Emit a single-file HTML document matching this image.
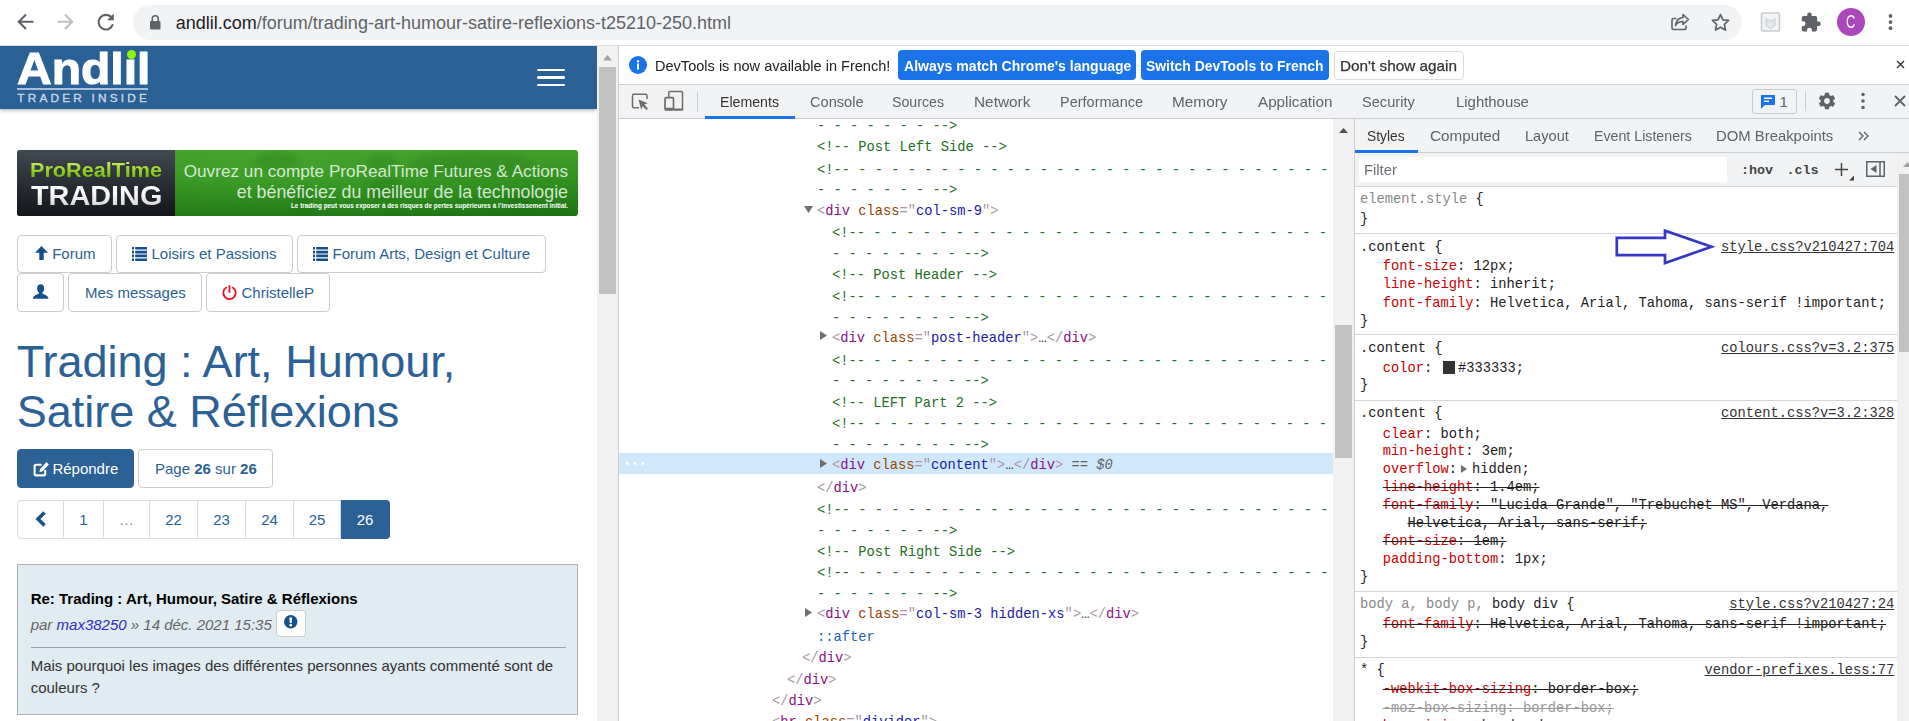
<!DOCTYPE html>
<html lang="fr"><head><meta charset="utf-8"><title>Trading : Art, Humour, Satire &amp; Réflexions</title>
<style>
*{box-sizing:border-box;margin:0;padding:0}
html,body{width:1909px;height:721px;overflow:hidden;background:#fff}
body{font-family:"Liberation Sans",Arial,sans-serif;position:relative;color:#333}
.abs,.abs>*{position:absolute}
.t{white-space:pre}
svg{display:block;overflow:visible}
/* chrome toolbar */
#tb{left:0;top:0;width:1909px;height:45px;background:#fff}
#tbline{left:0;top:45px;width:1909px;height:1px;background:#dcdde0}
#pill{left:133px;top:5px;width:1609px;height:35px;border-radius:18px;background:#f1f3f4}
#url{left:175.8px;top:11.7px;font-size:18px;line-height:22px;color:#5f6368;white-space:nowrap}
#url b{position:static;font-weight:normal;color:#202124}
/* page */
#page{left:0;top:46px;width:597px;height:675px;overflow:hidden;background:#fff}
#hdr{left:0;top:0;width:597px;height:62.5px;background:#2b6094;box-shadow:0 1px 4px rgba(0,0,0,.35)}
.bar{left:537px;width:28px;height:2.6px;border-radius:1.3px;background:#fff}
#logo{left:16.6px;top:.3px;font-size:44.6px;line-height:46px;font-weight:bold;color:#fff;letter-spacing:0;white-space:nowrap;transform:scaleX(1.077);transform-origin:0 0;-webkit-text-stroke:1.1px #fff}
#logoline{left:17px;top:42px;width:131px;height:2px;background:#a9bfd6}
#logosub{left:17.3px;top:45.3px;font-size:11.8px;line-height:14px;font-weight:normal;color:#ccd8e5;letter-spacing:3.2px;white-space:nowrap;-webkit-text-stroke:.35px #ccd8e5}
#dot{left:126.5px;top:3.5px;width:9px;height:9px;border-radius:50%;background:#8cf500}
#bn{left:17px;top:104px;width:561px;height:66px;border-radius:3px;overflow:hidden;background:radial-gradient(ellipse 60% 90% at 45% 40%,rgba(90,190,60,.28),rgba(90,190,60,0) 100%),linear-gradient(#419f28,#2c8c1c 55%,#1c7212)}
#bnd{left:0;top:0;width:158px;height:66px;background:linear-gradient(#434952,#2a2e35 50%,#14161b)}
#prt{left:13px;top:8px;font-size:19.5px;line-height:24px;font-weight:bold;color:transparent;background:linear-gradient(#c4ec5a 20%,#8fd01e 55%,#6fb512 85%);-webkit-background-clip:text;background-clip:text;transform:scaleX(1.11);transform-origin:0 0;white-space:nowrap;}
#trd{left:14px;top:30px;font-size:28px;line-height:32px;font-weight:bold;color:transparent;background:linear-gradient(#fff 35%,#d8d8d8 80%);-webkit-background-clip:text;background-clip:text;transform:scaleX(1.03);transform-origin:0 0;white-space:nowrap}
.gt{right:10px;font-size:17.5px;line-height:21px;color:rgba(255,255,255,.8);white-space:nowrap}
#tiny{right:10px;top:52.4px;font-size:6.4px;line-height:8px;font-weight:bold;color:#fff;white-space:nowrap}
.btn{height:38px;border:1px solid #ccc;border-radius:4px;background:#fff;color:#2b6195;font-size:15px;line-height:36px;white-space:nowrap}
.btn span{position:absolute;top:0}
.pg{top:454px;height:39px;border:1px solid #ddd;border-left-width:0;background:#fff;color:#2b6195;font-size:15px;line-height:38px;text-align:center}
#post{left:17px;top:517.8px;width:561px;height:151px;background:#e1ebf2;border:1px solid #a9b2b9}
/* scrollbars etc */
#sb1{left:597px;top:46px;width:21px;height:675px;background:#f1f1f1}
#sep{left:618px;top:46px;width:1px;height:675px;background:#cbcdd1}
/* devtools */
#dt{left:619px;top:46px;width:1290px;height:675px;background:#fff;overflow:hidden;font-size:14.5px;color:#333}
.ui{font-size:15px;line-height:20px;white-space:nowrap;color:#5f6368;transform-origin:0 50%}
.mono{font-family:"Liberation Mono","DejaVu Sans Mono",monospace;font-size:13.75px;white-space:pre}
.el{left:0;height:21.3px;line-height:21.3px;color:#236e25}
.tg{color:#881280}.br{color:#a894a6}.an{color:#994500}.av{color:#1a1aa6}
.sl{height:18px;line-height:18px;color:#222}
.pn{color:#c80000}.gy{color:#888}.lk{color:#333;text-decoration:underline}
.st{text-decoration:line-through;text-decoration-color:#222}
.hs{left:736px;width:554px;height:1px;background:#d4d6d9}
</style></head><body>
<div id="tb" class="abs"></div><div id="tbline" class="abs"></div><div id="pill" class="abs"></div>
<div id="url" class="abs"><b>andlil.com</b>/forum/trading-art-humour-satire-reflexions-t25210-250.html</div>
<svg class="abs" style="left:0;top:0" width="1909" height="45" viewBox="0 0 1909 45" fill="none" stroke-linecap="butt" stroke-linejoin="miter">
<g stroke="#5f6368" stroke-width="2.1"><path d="M33.5 21.700H18.800M26 14.5L18.800 21.700L26 28.900"/></g>
<g stroke="#bdc1c6" stroke-width="2.1"><path d="M57.5 21.700H72.200M65 14.5L72.200 21.700L65 28.900"/></g>
<g stroke="#5f6368" stroke-width="2.1"><path d="M111.600 17.600A7.300 7.300 0 1 0 112.900 24.300"/><path d="M113.800 13.500v6.800h-6.800z" fill="#5f6368" stroke="none"/></g>
<g fill="#5f6368"><rect x="150" y="21" width="10.5" height="8.5" rx="1"/><path d="M152.3 21v-2.3a2.95 2.95 0 0 1 5.9 0V21" stroke="#5f6368" stroke-width="1.6" fill="none"/></g>
<g stroke="#5f6368" stroke-width="1.6" stroke-linejoin="round"><path d="M1676.5 18.5h-3a1.5 1.5 0 0 0-1.5 1.5v8a1.5 1.5 0 0 0 1.5 1.5h11a1.5 1.5 0 0 0 1.5-1.5v-2.5"/><path d="M1683 14.5l5.5 5l-5.500 5v-3c-4 0-6 1.300-7.500 4c.5-4.500 3-7.500 7.500-8z"/></g>
<path d="M1720.500 14.600l2.400 5.200l5.700.650l-4.200 3.900l1.100 5.700l-5-2.900l-5 2.900l1.100-5.700l-4.200-3.900l5.700-.650z" stroke="#5f6368" stroke-width="1.7" stroke-linejoin="round"/>
<rect x="1761.500" y="13" width="18" height="18" rx="1.500" fill="#f1f3f4" stroke="#c6cacf" stroke-width="1.5"/>
<path d="M1765.300 17.500l5.200 2.800l5.200-2.800v8l-5.200 3.800l-5.200-3.800z" fill="#d3d9de"/><path d="M1767.300 20.800l3.200 1.700l3.200-1.700v4.200l-3.200 2.300l-3.200-2.300z" fill="#e6eaed"/>
<path d="M1818.500 21.500h-1.400v-3.600c0-1-.8-1.800-1.800-1.800h-3.600v-1.400a2.250 2.250 0 0 0-4.500 0v1.400h-3.600c-1 0-1.800.8-1.800 1.800v3.400h1.300a2.450 2.450 0 0 1 0 4.900h-1.300v3.400c0 1 .8 1.800 1.800 1.800h3.400v-1.300a2.450 2.450 0 0 1 4.900 0v1.300h3.400c1 0 1.800-.8 1.800-1.800v-3.600h1.400a2.250 2.250 0 0 0 0-4.500z" fill="#5f6368" stroke="none"/>
<circle cx="1851" cy="22" r="14" fill="#ab47bc"/>
<g fill="#5f6368"><circle cx="1890.5" cy="16" r="1.9"/><circle cx="1890.5" cy="22.100" r="1.900"/><circle cx="1890.5" cy="28.200" r="1.900"/></g>
</svg>
<div class="abs t" style="left:1846.300px;top:11.700px;font-size:17.5px;line-height:20px;color:#fff;transform:scaleX(.74);transform-origin:0 0">C</div>
<div id="page" class="abs">
<div id="hdr"></div>
<div class="bar" style="top:22.8px"></div>
<div class="bar" style="top:30.2px"></div>
<div class="bar" style="top:37.8px"></div>
<div id="logo">Andlıl</div><div id="dot"></div><div id="logoline"></div><div id="logosub">TRADER INSIDE</div>
<div id="bn" class="abs"><svg style="left:158px;top:0;filter:blur(2.5px)" width="403" height="66" viewBox="158 0 403 66"><g fill="#0b4d08" opacity=".13"><ellipse cx="260" cy="11" rx="21" ry="9"/><ellipse cx="286" cy="48" rx="9" ry="13"/><ellipse cx="365" cy="12" rx="14" ry="7"/><ellipse cx="368" cy="39" rx="16" ry="13"/><ellipse cx="455" cy="14" rx="60" ry="12"/><ellipse cx="503" cy="52" rx="14" ry="7"/></g></svg><div id="bnd"></div><div id="prt">ProRealTime</div><div id="trd">TRADING</div>
<div class="gt" style="top:10.9px;font-size:17.2px">Ouvrez un compte ProRealTime Futures &amp; Actions</div>
<div class="gt" style="top:32.2px;font-size:17.8px">et bénéficiez du meilleur de la technologie</div>
<div id="tiny">Le trading peut vous exposer à des risques de pertes supérieures à l’investissement initial.</div></div>
<div class="btn abs" style="left:17px;top:189px;width:94.5px;"><svg style="left:17.1px;top:10.4px" width="13" height="14" viewBox="0 0 13 14"><path d="M6.500 0L13 6.800H8.700V14H4.300V6.800H0z" fill="#15508a"/></svg><span style="left:34.2px">Forum</span></div>
<div class="btn abs" style="left:116px;top:189px;width:177px;"><svg style="left:14.7px;top:10.5px" width="15" height="14" viewBox="0 0 15 14" fill="#15508a"><path d="M0 0h2v2.600H0zM3.200 0H15v2.600H3.200zM0 3.800h2v2.600H0zM3.200 3.800H15v2.600H3.200zM0 7.600h2v2.600H0zM3.200 7.600H15v2.600H3.200zM0 11.400h2V14H0zM3.200 11.400H15V14H3.200z"/></svg><span style="left:34.5px">Loisirs et Passions</span></div>
<div class="btn abs" style="left:297px;top:189px;width:249px;"><svg style="left:14.7px;top:10.5px" width="15" height="14" viewBox="0 0 15 14" fill="#15508a"><path d="M0 0h2v2.600H0zM3.200 0H15v2.600H3.200zM0 3.800h2v2.600H0zM3.200 3.800H15v2.600H3.200zM0 7.600h2v2.600H0zM3.200 7.600H15v2.600H3.200zM0 11.400h2V14H0zM3.200 11.400H15V14H3.200z"/></svg><span style="left:34.5px">Forum Arts, Design et Culture</span></div>
<div class="btn abs" style="left:17px;top:227px;width:46.5px;height:38.5px;line-height:37.2px"><svg style="left:14.7px;top:10.3px" width="15.300" height="15" viewBox="0 0 16 15"><path d="M8 0c2.300 0 3.700 1.700 3.700 4.300c0 1.800-.9 3.500-1.900 4.300v1c0 .5 5.200 1.700 6.200 4.200V15H0v-1.200c1-2.500 6.200-3.700 6.200-4.200v-1C5.200 7.800 4.300 6.100 4.300 4.300C4.300 1.700 5.700 0 8 0z" fill="#15508a"/></svg></div>
<div class="btn abs" style="left:68px;top:227px;width:133.5px;height:38.5px;line-height:37.2px"><span style="left:15.900px">Mes messages</span></div>
<div class="btn abs" style="left:206px;top:227px;width:123.5px;height:38.5px;line-height:37.2px"><svg style="left:15px;top:10.5px" width="15" height="15" viewBox="0 0 15 15" fill="none" stroke="#f2101f" stroke-width="1.800" stroke-linecap="round"><path d="M4.300 2.600A6.200 6.200 0 1 0 10.700 2.600"/><path d="M7.500 0.800V7"/></svg><span style="left:34.500px">ChristelleP</span></div>
<div class="t" style="left:16.7px;top:291px;font-size:45px;line-height:50px;color:#2b6195">Trading : Art, Humour,
Satire &amp; Réflexions</div>
<div class="btn abs" style="left:17px;top:403px;width:116.5px;height:39px;line-height:37.6px;background:#2b6195;border-color:#2b6195;color:#fff"><svg style="left:14.500px;top:10.8px" width="17" height="16" viewBox="0 0 16 15" fill="none"><path d="M11.500 8.500V12a1.500 1.500 0 0 1-1.500 1.500H3A1.500 1.500 0 0 1 1.500 12V5A1.500 1.500 0 0 1 3 3.500h5" stroke="#fff" stroke-width="2"/><path d="M6 10.500l.7-3l6-6.500l2.300 2.200l-6 6.500z" fill="#fff"/></svg><span style="left:34.4px">Répondre</span></div>
<div class="btn abs" style="left:138px;top:403px;width:134.5px;height:39px;line-height:37.6px"><span style="left:16px">Page <b>26</b> sur <b>26</b></span></div>
<div class="pg abs" style="left:17px;width:47px;border-left-width:1px;border-radius:4px 0 0 4px;"><svg style="left:16.5px;top:9.5px" width="12" height="16" viewBox="0 0 12 16" fill="none"><path d="M9.500 1.500L3 8l6.500 6.500" stroke="#15508a" stroke-width="3.500"/></svg></div>
<div class="pg abs" style="left:64px;width:40px;">1</div>
<div class="pg abs" style="left:104px;width:46px;color:#8a8a8a;">…</div>
<div class="pg abs" style="left:150px;width:48px;">22</div>
<div class="pg abs" style="left:198px;width:48px;">23</div>
<div class="pg abs" style="left:246px;width:48px;">24</div>
<div class="pg abs" style="left:294px;width:47px;">25</div>
<div class="pg abs" style="left:341px;width:49px;background:#2b6195;border-color:#2b6195;color:#fff;border-radius:0 4px 4px 0;">26</div>
<div id="post" class="abs">
<div class="t" style="left:12.7px;top:24.3px;font-size:15px;line-height:20px;font-weight:bold;color:#000">Re: Trading : Art, Humour, Satire &amp; Réflexions</div>
<div class="t" style="left:12.7px;top:50.2px;font-size:15px;line-height:20px;font-style:italic;color:#666">par <span style="position:static;color:#2a2fc0">max38250</span> » 14 déc. 2021 15:35</div>
<div style="left:257.500px;top:45px;width:30.5px;height:27px;border:1px solid #ccc;border-radius:4px;background:#fff"></div>
<svg style="left:266.200px;top:49.8px" width="13.500" height="13.500" viewBox="0 0 13 13"><circle cx="6.500" cy="6.500" r="6.500" fill="#15508a"/><path d="M5.200 2.400h2.600l-.400 5.200h-1.800z" fill="#fff"/><circle cx="6.500" cy="9.800" r="1.300" fill="#fff"/></svg>
<div style="left:12.7px;top:82.4px;width:535px;height:1px;background:#9aa3aa"></div>
<div class="t" style="left:12.7px;top:90.4px;font-size:15px;line-height:21.9px;color:#333">Mais pourquoi les images des différentes personnes ayants commenté sont de
couleurs ?</div>
</div>
</div>
<div id="sb1" class="abs"><div style="left:2px;top:21px;width:17px;height:227px;background:#c1c1c1"></div><svg style="left:6px;top:8.500px" width="9" height="6" viewBox="0 0 9 6"><path d="M4.500 0L9 5.500H0z" fill="#a3a3a3"/></svg></div>
<div id="sep" class="abs"></div>
<div id="dt" class="abs">
<div style="left:0;top:38px;width:1290px;height:1px;background:#cbcdd1"></div>
<svg style="left:10px;top:10px" width="18" height="18" viewBox="0 0 18 18"><circle cx="9" cy="9" r="9" fill="#1a73e8"/><rect x="8" y="7.500" width="2" height="6" fill="#fff"/><rect x="8" y="4.200" width="2" height="2.100" fill="#fff"/></svg>
<div class="ui" style="left:36px;top:9.7px;color:#202124;transform:scaleX(0.9700)">DevTools is now available in French!</div>
<div style="left:279px;top:4px;width:238px;height:30px;background:#1a73e8;border-radius:4px"></div>
<div class="ui" style="left:284.5px;top:9.7px;color:#fff;font-weight:bold;transform:scaleX(0.9367)">Always match Chrome's language</div>
<div style="left:522px;top:4px;width:188px;height:30px;background:#1a73e8;border-radius:4px"></div>
<div class="ui" style="left:527px;top:9.7px;color:#fff;font-weight:bold;transform:scaleX(0.9267)">Switch DevTools to French</div>
<div style="left:715px;top:4.5px;width:129.500px;height:29.5px;background:#fff;border:1px solid #dadce0;border-radius:4px"></div>
<div class="ui" style="left:721px;top:9.7px;color:#333;transform:scaleX(1.0200);-webkit-text-stroke:.25px #333">Don't show again</div>
<svg style="left:1277px;top:13.5px" width="9" height="9" viewBox="0 0 9 9"><path d="M1 1l7 7M8 1l-7 7" stroke="#333" stroke-width="1.400"/></svg>
<div style="left:0;top:39px;width:1290px;height:33px;background:#f1f3f4"></div>
<div style="left:0;top:72px;width:1290px;height:1px;background:#cbcdd1"></div>
<svg style="left:11px;top:44px" width="70" height="24" viewBox="0 0 70 24" fill="none">
<path d="M9 17.700H4a1.500 1.500 0 0 1-1.500-1.500V5.700A1.500 1.500 0 0 1 4 4.200h11.500A1.500 1.500 0 0 1 17 5.700V9" stroke="#6e6e6e" stroke-width="1.500"/>
<path d="M8.500 9.500l9.300 3.800l-3.600 1.300l3.800 3.800l-1.600 1.600l-3.800-3.800l-1.400 3.600z" fill="#6e6e6e"/>
<path d="M38.800 7V2.500a1 1 0 0 1 1-1H51.500a1 1 0 0 1 1 1V19.500H44" stroke="#6e6e6e" stroke-width="1.500"/><path d="M44 19.700h8.500" stroke="#6e6e6e" stroke-width="2"/>
<rect x="35" y="7.700" width="8.500" height="12.300" rx="1.200" stroke="#6e6e6e" stroke-width="1.700"/><path d="M35 19h8.500" stroke="#6e6e6e" stroke-width="2.400"/>
<path d="M67.500 2v20" stroke="#cbcdd1" stroke-width="1"/></svg>
<div class="ui" style="left:101px;top:45.7px;transform:scaleX(0.9433);color:#333;">Elements</div>
<div class="ui" style="left:191px;top:45.7px;transform:scaleX(0.9733);">Console</div>
<div class="ui" style="left:273px;top:45.7px;transform:scaleX(0.9453);">Sources</div>
<div class="ui" style="left:354.8px;top:45.7px;transform:scaleX(1.024);">Network</div>
<div class="ui" style="left:441px;top:45.7px;transform:scaleX(0.9667);">Performance</div>
<div class="ui" style="left:553.3px;top:45.7px;transform:scaleX(1.0247);">Memory</div>
<div class="ui" style="left:638.5px;top:45.7px;transform:scaleX(1.0133);">Application</div>
<div class="ui" style="left:743px;top:45.7px;transform:scaleX(0.9733);">Security</div>
<div class="ui" style="left:837px;top:45.7px;transform:scaleX(0.9933);">Lighthouse</div>
<div style="left:86px;top:70px;width:90px;height:3px;background:#1a73e8"></div>
<div style="left:1133px;top:43px;width:45px;height:24.5px;border:1px solid #c8cacd;border-radius:3px;background:#f1f3f4"></div>
<svg style="left:1142px;top:49px" width="14" height="14" viewBox="0 0 14 14"><path d="M1 0h12a1 1 0 0 1 1 1v8a1 1 0 0 1-1 1H4l-4 3.800V1a1 1 0 0 1 1-1z" fill="#1a73e8"/><path d="M3 3.200h8M3 6.200h5" stroke="#fff" stroke-width="1.500"/></svg>
<div class="ui" style="left:1160.5px;top:45.5px;color:#5f6368">1</div>
<div style="left:1186px;top:45px;width:1px;height:20px;background:#cbcdd1"></div>
<svg style="left:1198px;top:45px" width="20" height="20" viewBox="0 0 24 24"><path fill="#5f6368" d="M19.430 12.980c.040-.320.070-.640.070-.980s-.030-.660-.070-.980l2.110-1.650c.190-.150.240-.420.120-.640l-2-3.460c-.120-.220-.390-.300-.610-.220l-2.490 1c-.520-.400-1.080-.730-1.690-.980l-.380-2.650A.488.488 0 0 0 14 2h-4c-.250 0-.460.180-.490.420l-.380 2.650c-.610.250-1.170.590-1.690.980l-2.490-1c-.230-.090-.490 0-.610.220l-2 3.460c-.130.220-.070.490.120.640l2.110 1.650c-.040.320-.070.650-.070.980s.030.660.070.980l-2.110 1.650c-.190.150-.240.420-.120.640l2 3.460c.120.220.390.300.610.220l2.490-1c.520.400 1.080.730 1.690.980l.380 2.650c.030.240.240.420.490.420h4c.250 0 .460-.180.490-.420l.380-2.650c.610-.250 1.170-.590 1.690-.980l2.490 1c.230.090.490 0 .610-.220l2-3.460c.120-.220.070-.490-.120-.640l-2.110-1.650zM12 15.500c-1.930 0-3.500-1.570-3.500-3.500s1.570-3.500 3.500-3.500 3.500 1.570 3.500 3.500-1.570 3.500-3.500 3.500z"/></svg>
<svg style="left:1242px;top:46px" width="4" height="18" viewBox="0 0 4 18" fill="#5f6368"><circle cx="2" cy="2.500" r="1.800"/><circle cx="2" cy="9" r="1.800"/><circle cx="2" cy="15.500" r="1.800"/></svg>
<svg style="left:1275px;top:49px" width="12" height="12" viewBox="0 0 12 12"><path d="M1 1l10 10M11 1L1 11" stroke="#5f6368" stroke-width="1.800"/></svg>
<div class="abs" style="left:0;top:73px;width:714px;height:602px;overflow:hidden">
<div class="mono el" style="left:198px;top:-3.15px">- - - - - - - --&gt;</div>
<div class="mono el" style="left:198px;top:18.15px">&lt;!-- Post Left Side --&gt;</div>
<div class="mono el" style="left:198px;top:41.15px">&lt;!-- - - - - - - - - - - - - - - - - - - - - - - - - - - - - -</div>
<div class="mono el" style="left:198px;top:60.75px">- - - - - - - --&gt;</div>
<div class="mono el" style="left:198px;top:82.05px"><span class="br">&lt;</span><span class="tg">div</span> <span class="an">class</span><span class="br">="</span><span class="av">col-sm-9</span><span class="br">"</span><span class="br">&gt;</span></div>
<svg style="left:185px;top:86.55px" width="9" height="7" viewBox="0 0 9 7"><path d="M0 0h9L4.500 7z" fill="#6e6e6e"/></svg>
<div class="mono el" style="left:213px;top:104.35px">&lt;!-- - - - - - - - - - - - - - - - - - - - - - - - - - - - -</div>
<div class="mono el" style="left:213px;top:124.65px">- - - - - - - - --&gt;</div>
<div class="mono el" style="left:213px;top:145.95px">&lt;!-- Post Header --&gt;</div>
<div class="mono el" style="left:213px;top:168.05px">&lt;!-- - - - - - - - - - - - - - - - - - - - - - - - - - - - -</div>
<div class="mono el" style="left:213px;top:188.55px">- - - - - - - - --&gt;</div>
<div class="mono el" style="left:213px;top:209.15px"><span class="br">&lt;</span><span class="tg">div</span> <span class="an">class</span><span class="br">="</span><span class="av">post-header</span><span class="br">"</span><span class="br">&gt;</span><span style="color:#333">…</span><span class="br">&lt;/</span><span class="tg">div</span><span class="br">&gt;</span></div>
<svg style="left:201px;top:212.35px" width="7" height="9" viewBox="0 0 7 9"><path d="M0 0v9l7-4.500z" fill="#6e6e6e"/></svg>
<div class="mono el" style="left:213px;top:231.95px">&lt;!-- - - - - - - - - - - - - - - - - - - - - - - - - - - - -</div>
<div class="mono el" style="left:213px;top:252.45px">- - - - - - - - --&gt;</div>
<div class="mono el" style="left:213px;top:273.75px">&lt;!-- LEFT Part 2 --&gt;</div>
<div class="mono el" style="left:213px;top:295.05px">&lt;!-- - - - - - - - - - - - - - - - - - - - - - - - - - - - -</div>
<div class="mono el" style="left:213px;top:316.35px">- - - - - - - - --&gt;</div>
<div style="left:0;top:333.85px;width:714px;height:21.4px;background:#cfe8fc"></div>
<div class="mono" style="left:5px;top:334.65px;color:#fff;font-size:11px;line-height:20px;letter-spacing:1px">•••</div>
<div class="mono el" style="left:213px;top:336.45px"><span class="br">&lt;</span><span class="tg">div</span> <span class="an">class</span><span class="br">="</span><span class="av">content</span><span class="br">"</span><span class="br">&gt;</span><span style="color:#333">…</span><span class="br">&lt;/</span><span class="tg">div</span><span class="br">&gt;</span><span style="color:#5f6368"> == <i>$0</i></span></div>
<svg style="left:201px;top:340.15px" width="7" height="9" viewBox="0 0 7 9"><path d="M0 0v9l7-4.500z" fill="#6e6e6e"/></svg>
<div class="mono el" style="left:198px;top:358.95px"><span class="br">&lt;/</span><span class="tg">div</span><span class="br">&gt;</span></div>
<div class="mono el" style="left:198px;top:381.25px">&lt;!-- - - - - - - - - - - - - - - - - - - - - - - - - - - - - -</div>
<div class="mono el" style="left:198px;top:401.55px">- - - - - - - --&gt;</div>
<div class="mono el" style="left:198px;top:422.85px">&lt;!-- Post Right Side --&gt;</div>
<div class="mono el" style="left:198px;top:444.15px">&lt;!-- - - - - - - - - - - - - - - - - - - - - - - - - - - - - -</div>
<div class="mono el" style="left:198px;top:465.45px">- - - - - - - --&gt;</div>
<div class="mono el" style="left:198px;top:485.35px"><span class="br">&lt;</span><span class="tg">div</span> <span class="an">class</span><span class="br">="</span><span class="av">col-sm-3 hidden-xs</span><span class="br">"</span><span class="br">&gt;</span><span style="color:#333">…</span><span class="br">&lt;/</span><span class="tg">div</span><span class="br">&gt;</span></div>
<svg style="left:186px;top:489.25px" width="7" height="9" viewBox="0 0 7 9"><path d="M0 0v9l7-4.500z" fill="#6e6e6e"/></svg>
<div class="mono el" style="left:198px;top:508.05px"><span style="color:#1a5fb4">::after</span></div>
<div class="mono el" style="left:183px;top:529.35px"><span class="br">&lt;/</span><span class="tg">div</span><span class="br">&gt;</span></div>
<div class="mono el" style="left:168px;top:550.65px"><span class="br">&lt;/</span><span class="tg">div</span><span class="br">&gt;</span></div>
<div class="mono el" style="left:153px;top:571.95px"><span class="br">&lt;/</span><span class="tg">div</span><span class="br">&gt;</span></div>
<div class="mono el" style="left:153px;top:593.25px"><span class="br">&lt;</span><span class="tg">hr</span> <span class="an">class</span><span class="br">="</span><span class="av">divider</span><span class="br">"</span><span class="br">&gt;</span></div>
</div>
<div style="left:714px;top:73px;width:21px;height:602px;background:#f1f1f1"></div>
<div style="left:716px;top:279px;width:17px;height:133px;background:#c1c1c1"></div>
<svg style="left:720px;top:82px" width="9" height="5" viewBox="0 0 9 5"><path d="M4.500 0L9 5H0z" fill="#505050"/></svg>
<div style="left:735px;top:73px;width:1px;height:602px;background:#cbcdd1"></div>
<div style="left:736px;top:73px;width:554px;height:68px;background:#f1f3f4"></div>
<div style="left:736px;top:106px;width:554px;height:1px;background:#cbcdd1"></div>
<div style="left:736px;top:104px;width:63px;height:3px;background:#1a73e8"></div>
<div class="ui" style="left:748px;top:79.5px;transform:scaleX(0.92);color:#333;">Styles</div>
<div class="ui" style="left:810.5px;top:79.5px;transform:scaleX(1.016);">Computed</div>
<div class="ui" style="left:906px;top:79.5px;transform:scaleX(0.9733);">Layout</div>
<div class="ui" style="left:974.8px;top:79.5px;transform:scaleX(0.9467);">Event Listeners</div>
<div class="ui" style="left:1097px;top:79.5px;transform:scaleX(0.9907);">DOM Breakpoints</div>
<svg style="left:1239px;top:84.5px" width="11" height="10" viewBox="0 0 11 10" fill="none" stroke="#5f6368" stroke-width="1.400"><path d="M1 1l4 4l-4 4M6 1l4 4l-4 4"/></svg>
<div style="left:740px;top:111px;width:368px;height:25px;background:#fff"></div>
<div class="ui" style="left:745px;top:113.5px;transform:scaleX(0.9867);color:#6a6e73">Filter</div>
<div class="mono" style="left:1122px;top:115.5px;font-weight:bold;color:#444;line-height:18px;font-size:13.4px">:hov</div>
<div class="mono" style="left:1167.5px;top:115.5px;font-weight:bold;color:#444;line-height:18px;font-size:13.4px">.cls</div>
<svg style="left:1215.5px;top:116.5px" width="22" height="16" viewBox="0 0 22 16"><path d="M6.500 0v13M0 6.500h13" stroke="#444" stroke-width="1.500" fill="none"/><path d="M19 12.500v5h-5z" fill="#444"/></svg>
<svg style="left:1246.8px;top:115px" width="19" height="16" viewBox="0 0 19 16" fill="none"><rect x=".75" y=".75" width="17.500" height="14.500" stroke="#5f6368" stroke-width="1.500"/><path d="M14 1v14" stroke="#5f6368" stroke-width="1.500"/><path d="M10.500 4v8L4.500 8z" fill="#5f6368"/></svg>
<div class="hs" style="top:140px"></div>
<div class="hs" style="top:187.3px"></div>
<div class="hs" style="top:288.3px"></div>
<div class="hs" style="top:354.3px"></div>
<div class="hs" style="top:545px"></div>
<div class="hs" style="top:610.5px"></div>
<div class="mono sl" style="left:741px;top:144.8px"><span class="gy">element.style</span> {</div>
<div class="mono sl" style="left:741px;top:165.0px">}</div>
<div class="mono sl" style="left:741px;top:193.0px">.content {</div>
<div class="mono sl lk" style="right:14.7px;top:193.0px">style.css?v210427:704</div>
<div class="mono sl" style="left:763.75px;top:212.4px"><span class="pn">font-size</span>: 12px;</div>
<div class="mono sl" style="left:763.75px;top:230.4px"><span class="pn">line-height</span>: inherit;</div>
<div class="mono sl" style="left:763.75px;top:248.7px"><span class="pn">font-family</span>: Helvetica, Arial, Tahoma, sans-serif !important;</div>
<div class="mono sl" style="left:741px;top:266.8px">}</div>
<div class="mono sl" style="left:741px;top:294.0px">.content {</div>
<div class="mono sl lk" style="right:14.7px;top:294.0px">colours.css?v=3.2:375</div>
<div class="mono sl" style="left:763.75px;top:313.8px"><span class="pn">color</span>: <span style="display:inline-block;position:static;width:12.500px;height:12.500px;background:#333;vertical-align:-2px;margin:0 3px 0 2px"></span>#333333;</div>
<div class="mono sl" style="left:741px;top:331.4px">}</div>
<div class="mono sl" style="left:741px;top:359.2px">.content {</div>
<div class="mono sl lk" style="right:14.7px;top:359.2px">content.css?v=3.2:328</div>
<div class="mono sl" style="left:763.75px;top:379.7px"><span class="pn">clear</span>: both;</div>
<div class="mono sl" style="left:763.75px;top:397.2px"><span class="pn">min-height</span>: 3em;</div>
<div class="mono sl" style="left:763.75px;top:415.2px"><span class="pn">overflow</span>:<svg style="display:inline-block;position:static;margin:0 5px 0 4px" width="6" height="8" viewBox="0 0 6 8"><path d="M0 0v8l6-4z" fill="#6e6e6e"/></svg>hidden;</div>
<div class="mono sl" style="left:763.75px;top:433.2px"><span class="st"><span class="pn">line-height</span>: 1.4em;</span></div>
<div class="mono sl" style="left:763.75px;top:451.2px"><span class="st"><span class="pn">font-family</span>: "Lucida Grande", "Trebuchet MS", Verdana,</span></div>
<div class="mono sl" style="left:788.5px;top:469.2px"><span class="st">Helvetica, Arial, sans-serif;</span></div>
<div class="mono sl" style="left:763.75px;top:487.2px"><span class="st"><span class="pn">font-size</span>: 1em;</span></div>
<div class="mono sl" style="left:763.75px;top:505.2px"><span class="pn">padding-bottom</span>: 1px;</div>
<div class="mono sl" style="left:741px;top:523.2px">}</div>
<div class="mono sl" style="left:741px;top:549.7px"><span class="gy">body a, body p, </span>body div {</div>
<div class="mono sl lk" style="right:14.7px;top:549.7px">style.css?v210427:24</div>
<div class="mono sl" style="left:763.75px;top:570.2px"><span class="st"><span class="pn">font-family</span>: Helvetica, Arial, Tahoma, sans-serif !important;</span></div>
<div class="mono sl" style="left:741px;top:588.2px">}</div>
<div class="mono sl" style="left:741px;top:615.7px">* {</div>
<div class="mono sl lk" style="right:14.7px;top:615.7px">vendor-prefixes.less:77</div>
<div class="mono sl" style="left:763.75px;top:635.2px"><span class="st"><span class="pn">-webkit-box-sizing</span>: border-box;</span></div>
<div class="mono sl" style="left:763.75px;top:653.7px"><span class="st" style="color:#999;text-decoration-color:#999">-moz-box-sizing: border-box;</span></div>
<div class="mono sl" style="left:763.75px;top:671.7px"><span class="pn">box-sizing</span>: border-box;</div>
<svg style="left:995.5px;top:178.5px" width="110" height="44" viewBox="0 0 110 44" fill="none"><path d="M1.800 12.800H50V5.700L96.500 21.700L50 38.100V30.100H1.800z" stroke="#3636c9" stroke-width="2.700" stroke-linejoin="miter"/></svg>
<div style="left:1278px;top:107px;width:12px;height:568px;background:#f1f1f1"></div>
<div style="left:1280px;top:128px;width:12px;height:177.5px;background:#c1c1c1"></div>
<svg style="left:1284px;top:116px" width="9" height="5" viewBox="0 0 9 5"><path d="M4.500 0L9 5H0z" fill="#a3a3a3"/></svg>
</div>
</body></html>
